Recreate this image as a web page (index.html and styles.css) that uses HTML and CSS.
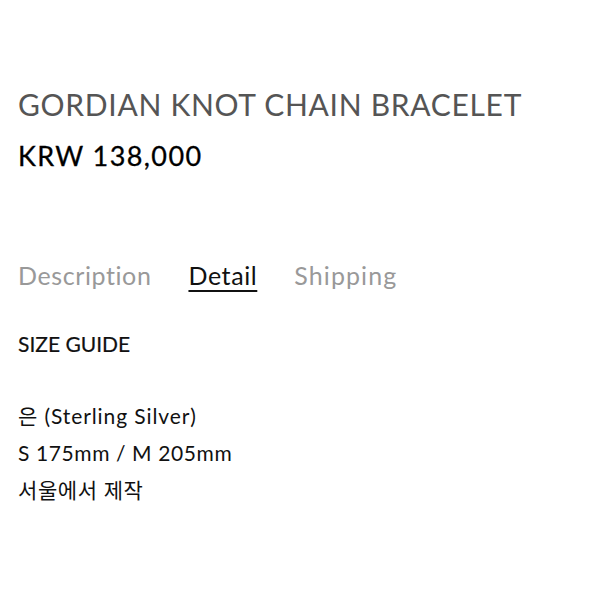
FILE: index.html
```html
<!DOCTYPE html>
<html lang="ko">
<head>
<meta charset="utf-8">
<link rel="stylesheet" href="styles.css">
</head>
<body>
<main class="product">
  <h1 class="title">GORDIAN KNOT CHAIN BRACELET</h1>
  <p class="price">KRW 138,000</p>
  <nav class="tabs">
    <span class="tab">Description</span>
    <span class="tab active">Detail</span>
    <span class="tab">Shipping</span>
  </nav>
  <h2 class="section">SIZE GUIDE</h2>
  <div class="info">
    <p>은 (Sterling Silver)</p>
    <p>S 175mm / M 205mm</p>
    <p>서울에서 제작</p>
  </div>
</main>
</body>
</html>
```
FILE: styles.css
```css
* { box-sizing: border-box; }
html, body { margin: 0; padding: 0; background: #fff; }
body { font-family: "Lato", "Noto Sans CJK KR", sans-serif; color: #111; }
.product { padding: 86px 18px 0 18px; }
.title { margin: 0; font-weight: 400; font-size: 30px; line-height: 36px; color: #555; letter-spacing: 0.7px; }
.price { margin: 18px 0 0 0; font-size: 27px; line-height: 32px; color: #000; letter-spacing: 1.4px; -webkit-text-stroke: 0.3px #000; }
.tabs { display: flex; gap: 37px; margin-top: 88px; font-size: 25px; line-height: 30px; letter-spacing: 0.6px; }
.tab { color: #999; }
.tab:last-child { letter-spacing: 1.1px; }
.tab.active { color: #111; text-decoration: underline; text-underline-offset: 5px; text-decoration-thickness: 2px; }
.section { margin: 41px 0 0 0; font-weight: 400; font-size: 21px; line-height: 26px; color: #111; -webkit-text-stroke: 0.2px #111; }
.info { margin-top: 40px; font-size: 21px; line-height: 37px; letter-spacing: 0.6px; }
.info p { margin: 0; }
.info p:first-child { letter-spacing: 0.9px; }
```
